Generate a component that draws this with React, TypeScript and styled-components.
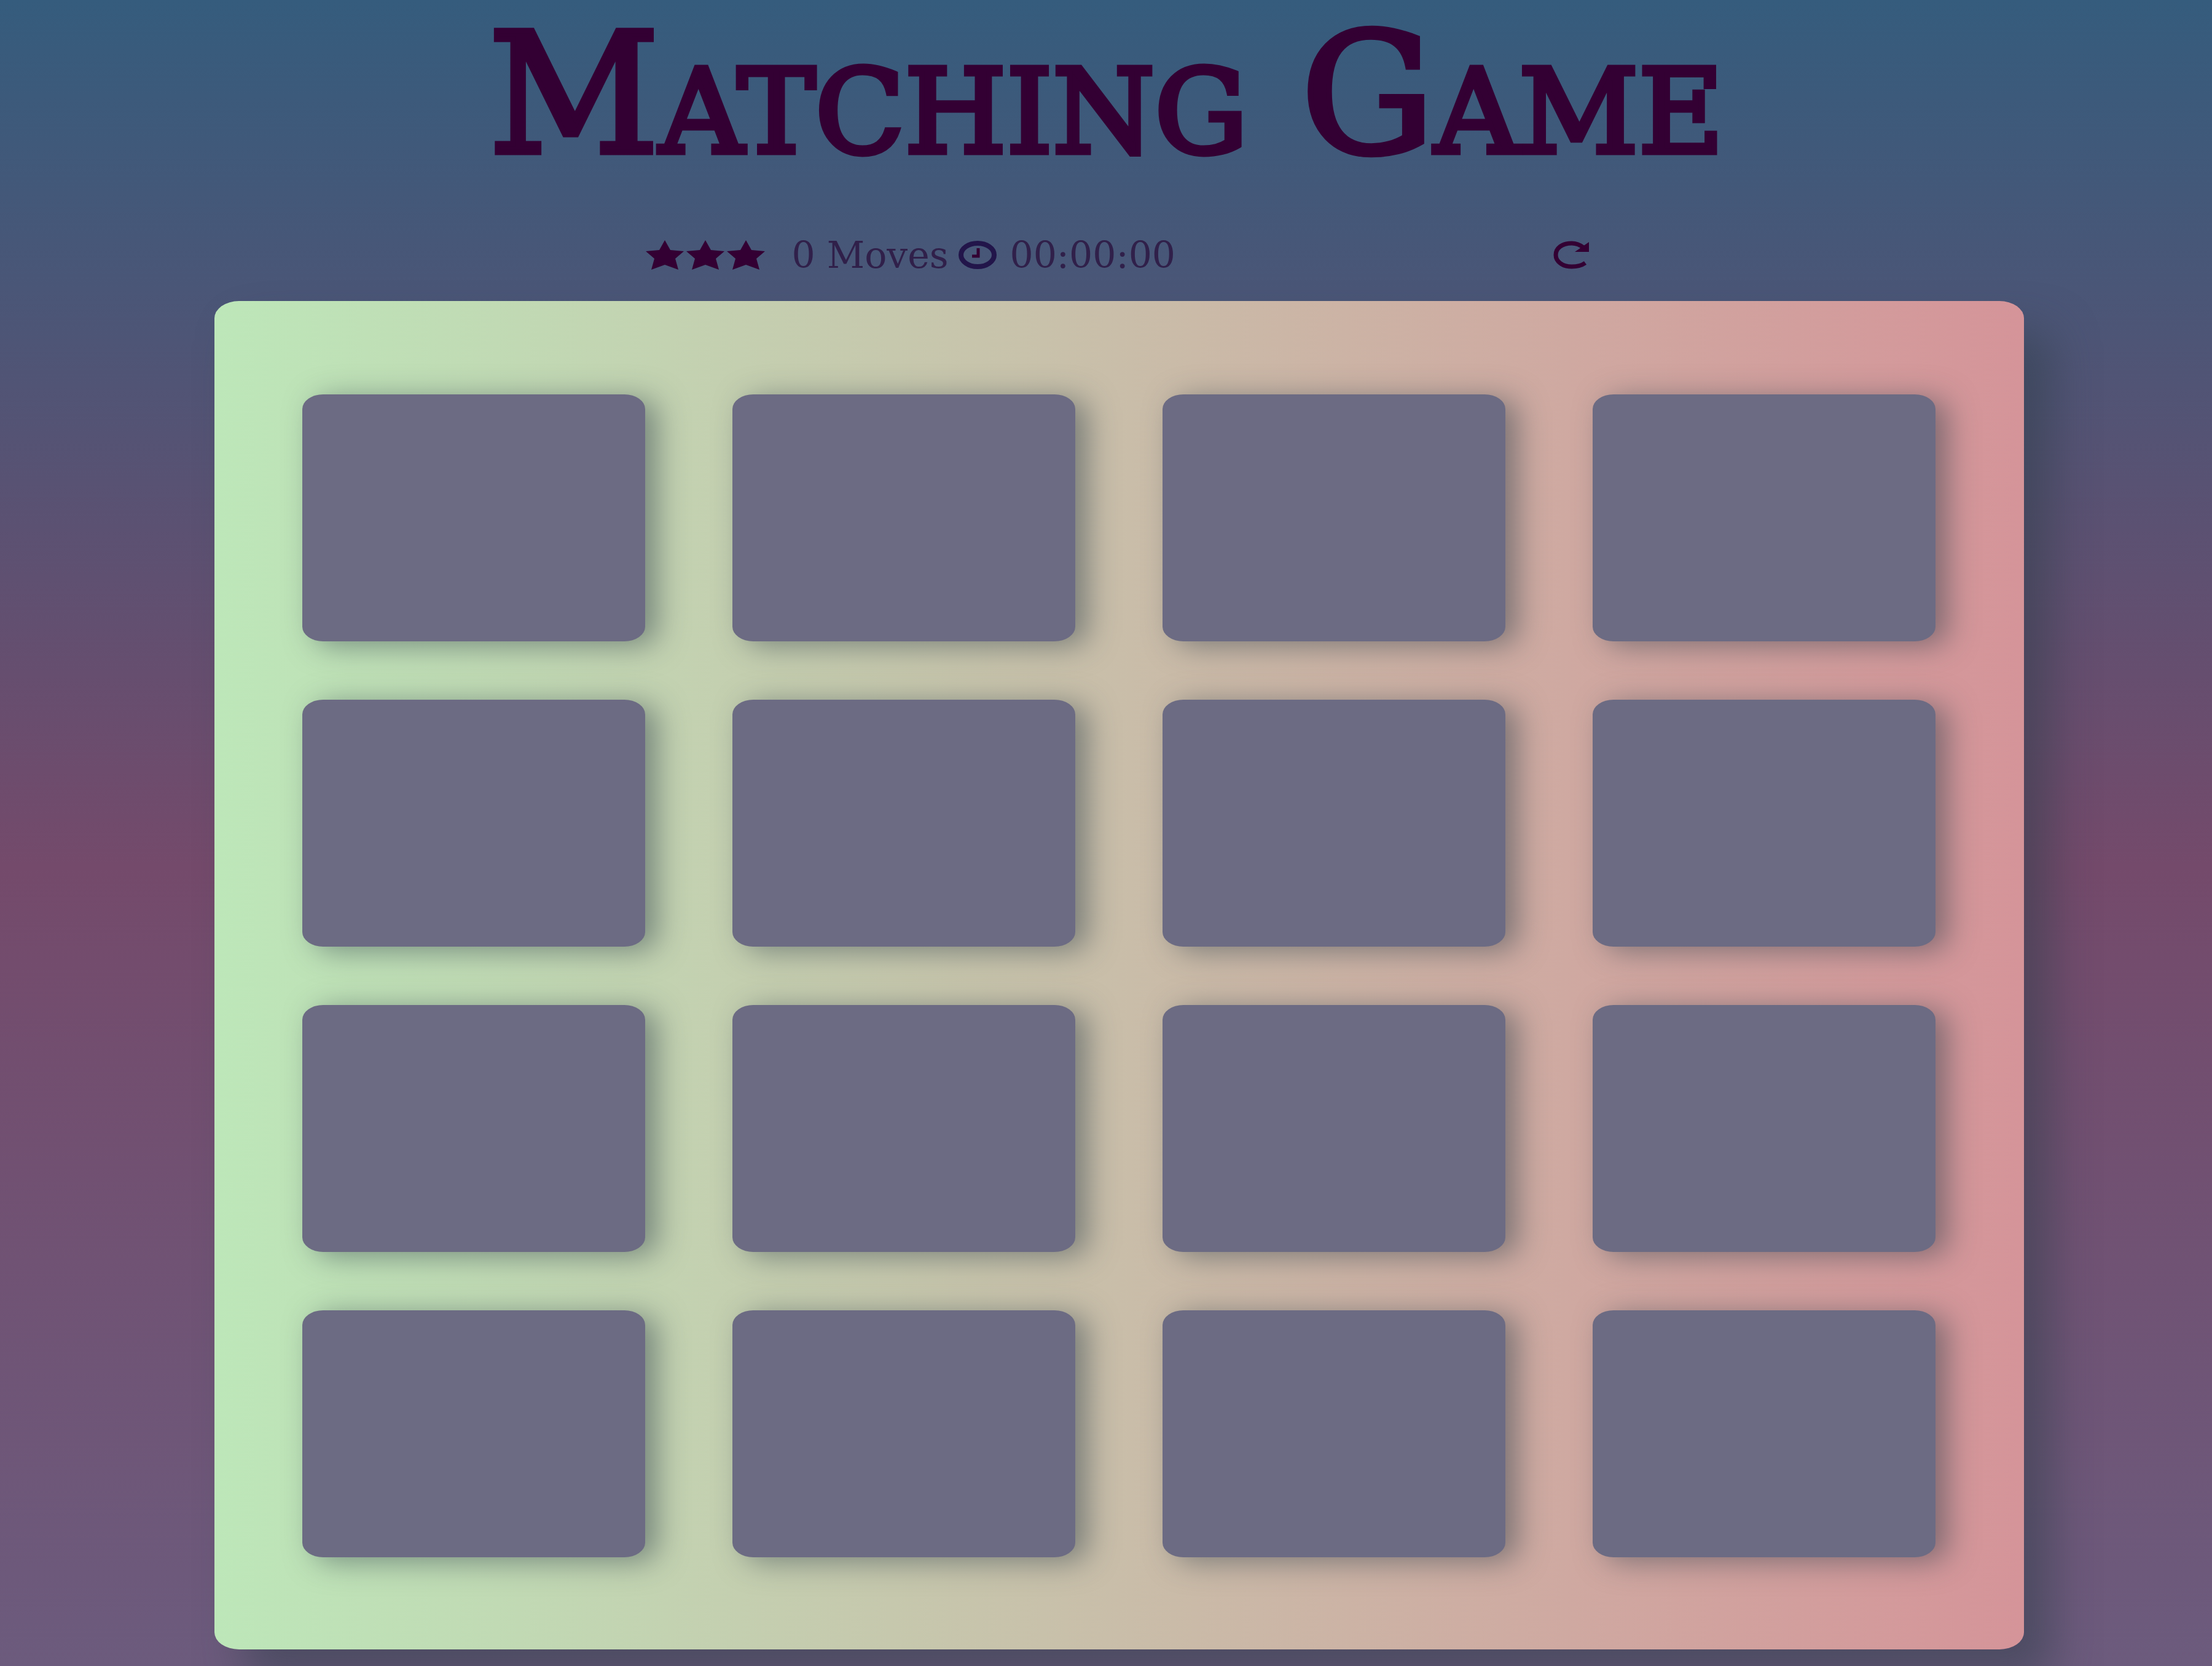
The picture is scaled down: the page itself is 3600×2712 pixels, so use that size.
import React, { useState } from "react";
import styled, { createGlobalStyle } from "styled-components";

const ink = "#330033";

const GlobalStyle = createGlobalStyle`
  * { box-sizing: border-box; }
  body {
    margin: 0;
    min-height: 100vh;
    background: linear-gradient(180deg, #355c7d 0%, #744a6b 52%, #6c5b7d 100%);
    color: ${ink};
    font-family: "DejaVu Serif", serif;
  }
`;

const Page = styled.div`
  display: flex;
  flex-direction: column;
  min-height: 100vh;
`;

const Title = styled.h1`
  margin: 0;
  text-align: center;
  font-size: 272px;
  line-height: 308px;
  font-weight: 400;
  font-variant: small-caps;
  white-space: nowrap;
  -webkit-text-stroke: 9px ${ink};
`;

const Main = styled.main`
  display: flex;
  flex-direction: column;
  align-items: center;
  padding: 72px 306px 28px 349px;
`;

const ScorePanel = styled.section`
  display: flex;
  align-items: center;
  width: 100%;
  max-width: 1542px;
  height: 70px;
  margin-bottom: 40px;
  font-size: 60px;
  line-height: 70px;
  color: #30204a;
`;

const Stars = styled.ul`
  display: flex;
  gap: 4px;
  margin: 0 44px 0 0;
  padding: 0;
  list-style: none;
`;

const StarItem = styled.li`
  display: flex;
`;

const Moves = styled.span`
  margin-right: 16px;
`;

const Timer = styled.span`
  display: flex;
  align-items: center;
  gap: 22px;
`;

const Restart = styled.button`
  display: flex;
  margin: 0 6px 0 auto;
  padding: 0;
  border: 0;
  background: none;
  cursor: pointer;
`;

const Board = styled.div`
  display: grid;
  grid-template-columns: repeat(4, 1fr);
  grid-auto-rows: 402px;
  gap: 95px 142px;
  width: 100%;
  padding: 152px 144px 150px 143px;
  border-radius: 40px / 28px;
  background: linear-gradient(90deg, #bde7b9 0%, #d59499 100%);
  box-shadow: 46px 50px 70px 0 rgba(46, 61, 73, 0.5);
`;

const Card = styled.button`
  padding: 0;
  border: 0;
  border-radius: 34px / 24px;
  background: #6c6b83;
  box-shadow: 20px 7px 48px 0 rgba(46, 61, 73, 0.5);
  cursor: pointer;
`;

const Star = () => (
  <svg width="62" height="48" viewBox="0 0 62 48" aria-hidden="true">
    <path
      d="M31 0 L40 16 L62 18 L48 30 L53 48 L31 40 L9 48 L14 30 L0 18 L22 16 Z"
      fill={ink}
    />
  </svg>
);

const Clock = () => (
  <svg width="62" height="46" viewBox="0 0 62 46" fill="none" aria-hidden="true">
    <ellipse cx="31" cy="23" rx="27" ry="19" stroke="#22154a" strokeWidth="8" />
    <path d="M32 12 V25 H22" stroke={ink} strokeWidth="5" />
  </svg>
);

const RestartIcon = () => (
  <svg width="60" height="46" viewBox="0 0 60 46" fill="none" aria-hidden="true">
    <path
      d="M53 36 C46 41 38 42 31 42 C15 42 5 33 5 23 C5 12 15 4 31 4 C40 4 45 7 50 11"
      stroke={ink}
      strokeWidth="7"
    />
    <path d="M59 2 V18 H36 Z" fill={ink} />
  </svg>
);

const cards = Array.from({ length: 16 }, (_, i) => i + 1);

export default function App() {
  const [moves, setMoves] = useState(0);

  return (
    <>
      <GlobalStyle />
      <Page>
        <header>
          <Title>Matching Game</Title>
        </header>
        <Main>
          <ScorePanel>
            <Stars aria-label="Rating">
              {[1, 2, 3].map((n) => (
                <StarItem key={n}>
                  <Star />
                </StarItem>
              ))}
            </Stars>
            <Moves>{moves} Moves</Moves>
            <Timer>
              <Clock />
              00:00:00
            </Timer>
            <Restart type="button" aria-label="Restart" onClick={() => setMoves(0)}>
              <RestartIcon />
            </Restart>
          </ScorePanel>
          <Board>
            {cards.map((n) => (
              <Card
                key={n}
                type="button"
                aria-label={`Card ${n}`}
                onClick={() => setMoves((m) => m + 1)}
              />
            ))}
          </Board>
        </Main>
      </Page>
    </>
  );
}
